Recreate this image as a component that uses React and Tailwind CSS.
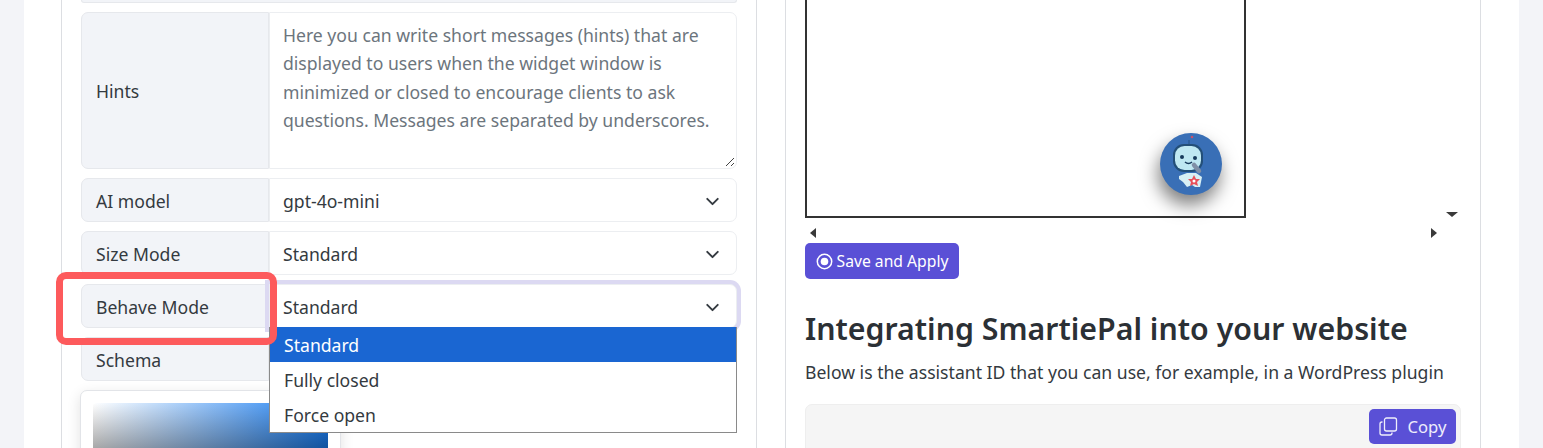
import React from 'react';
import { ChevronDown } from 'lucide-react';

const Chevron = () => <ChevronDown size={21} strokeWidth={2.2} className="text-[#343a40]" />;

const SelectRow = ({ label, value, focused }) => (
  <div className="flex h-[44px] shrink-0">
    <div className="w-[188px] shrink-0 flex items-center pl-[14px] pt-[2px] bg-[#f2f4f8] border border-[#e6e8ec] rounded-l-[7px] text-[#343a40]">{label}</div>
    <div className={`flex-1 flex items-center justify-between pl-[13px] pr-[13px] pt-[2px] bg-white border border-[#eceef1] rounded-r-[7px] text-[#343a40] ${focused ? 'shadow-[0_0_0_4px_#dcd9f2]' : ''}`}>
      <span>{value}</span>
      <Chevron />
    </div>
  </div>
);

const RobotBadge = () => (
  <svg width="64" height="64" viewBox="0 0 64 64" className="drop-shadow-[-2px_10px_9px_rgba(0,0,0,0.5)]">
    <circle cx="32" cy="32" r="31" fill="#396fb6" />
    <circle cx="33" cy="5" r="1.3" fill="#c9506a" />
    <path d="M30 8v5" stroke="#2c5c96" strokeWidth="1.5" />
    <rect x="14" y="12" width="30" height="28" rx="11" fill="#234f78" />
    <rect x="16" y="14" width="26" height="24" rx="9.5" fill="#bfe8f2" />
    <circle cx="23" cy="25" r="2" fill="#173a5c" />
    <circle cx="36" cy="26" r="2" fill="#173a5c" />
    <path d="M26 30q3.500 3 7 0" fill="none" stroke="#173a5c" strokeWidth="1.5" />
    <path d="M35 33l5 6" stroke="#7f8fa6" strokeWidth="4.500" strokeLinecap="round" />
    <path d="M20 44l8-3 9 0 6 4-2 10-5 0-3-2-5 2-4-5-4-3z" fill="#d8f0f5" />
    <polygon points="35,43 37,47 41,47 38,50 39,54 35,52 31,54 32,50 29,47 33,47" fill="#e8505a" />
    <circle cx="35" cy="49" r="1.500" fill="#ffffff" />
  </svg>
);

const Arrow = ({ points, className }) => (
  <svg width="14" height="14" viewBox="0 0 14 14" className={className}>
    <polygon points={points} fill="#3a3a3a" />
  </svg>
);

const RadioIcon = () => (
  <svg width="17" height="17" viewBox="0 0 17 17" fill="none">
    <circle cx="8.500" cy="8.500" r="7.200" stroke="currentColor" strokeWidth="1.500" />
    <circle cx="8.500" cy="8.500" r="3.800" fill="currentColor" />
  </svg>
);

const CopyIcon = () => (
  <svg width="19" height="19" viewBox="0 0 19 19" fill="none" stroke="currentColor" strokeWidth="1.300">
    <rect x="5.500" y="1" width="12" height="13" rx="2" />
    <path d="M3.500 5H3a2 2 0 0 0-2 2v9a2 2 0 0 0 2 2h8a2 2 0 0 0 2-2v-.5" />
  </svg>
);

export default function App() {
  return (
    <div
      className="h-[448px] overflow-hidden bg-[#f3f4f8] relative text-[17.6px] leading-[28.3px]"
      style={{ fontFamily: '"Noto Sans", "Open Sans", sans-serif' }}
    >
      <div className="mx-[24px] h-full bg-white flex gap-[28px] pl-[37px] pr-[37px]">
        {/* Left card */}
        <div className="w-[696px] shrink-0 border-x border-[#dcdee2] px-[19px] flex flex-col gap-[9px]">
          <div className="h-[3px] shrink-0 border-b border-x border-[#e6e8ec] rounded-b-[7px] bg-[#f2f4f8]" />
          <div className="flex h-[157px] shrink-0">
            <div className="w-[188px] shrink-0 flex items-center pl-[14px] pt-[2px] bg-[#f2f4f8] border border-[#e6e8ec] rounded-l-[7px] text-[#343a40]">Hints</div>
            <div className="flex-1 relative bg-white border border-[#eceef1] rounded-r-[7px] pl-[13px] pr-[14px] pt-[8px] text-[#6c757d]">
              Here you can write short messages (hints) that are displayed to users when the widget window is minimized or closed to encourage clients to ask questions. Messages are separated by underscores.
              <svg width="10" height="10" viewBox="0 0 10 10" className="absolute right-[1px] bottom-[1px]">
                <path d="M1 9l8-8M6 9l3-3" stroke="#444" strokeWidth="1" />
              </svg>
            </div>
          </div>
          <SelectRow label="AI model" value="gpt-4o-mini" />
          <SelectRow label="Size Mode" value="Standard" />
          <SelectRow label="Behave Mode" value="Standard" focused />
          <SelectRow label="Schema" value="" />
          <div className="w-[261px] h-[80px] shrink-0 -ml-[1px] border border-[#e2e4e8] rounded-[7px] bg-white pt-[12px] px-[12px] shadow-[0_4px_14px_rgba(0,0,0,0.12)]">
            <div className="h-[60px] rounded-t-[3px] bg-[linear-gradient(to_right,#ffffff,#1a7df0)] relative overflow-hidden">
              <div className="absolute inset-0 bg-[linear-gradient(to_bottom,rgba(0,0,0,0),rgba(0,0,0,0.45))]" />
            </div>
          </div>
        </div>

        {/* Right card */}
        <div className="w-[696px] shrink-0 border-x border-[#dcdee2] px-[19px] flex flex-col">
          <div className="relative w-[656px] h-[236px] shrink-0">
            <div className="w-[441px] h-[218px] border-2 border-t-0 border-[#333333] bg-white relative">
              <div className="absolute left-[352px] top-[132px]"><RobotBadge /></div>
            </div>
            <Arrow points="4,7 10,2 10,12" className="absolute left-[1px] top-[226px]" />
            <Arrow points="4,2 10,7 4,12" className="absolute left-[622px] top-[226px]" />
            <Arrow points="1,4 13,4 7,9" className="absolute left-[640px] top-[208px]" />
          </div>
          <button className="mt-[7px] w-[154px] h-[36px] shrink-0 rounded-[5px] bg-[#5a50d6] text-white text-[15.7px] flex items-center justify-center gap-[4px]">
            <RadioIcon />
            Save and Apply
          </button>
          <h3 className="mt-[30px] text-[30.3px] leading-[40px] font-semibold text-[#2b3035] whitespace-nowrap">Integrating SmartiePal into your website</h3>
          <p className="mt-[9px] text-[17.6px] text-[#343a40] whitespace-nowrap">Below is the assistant ID that you can use, for example, in a WordPress plugin</p>
          <div className="mt-[18px] w-[656px] h-[60px] shrink-0 rounded-t-[7px] bg-[#f5f5f5] border border-[#eeeeee] flex justify-end pt-[4px] pr-[4px]">
            <button className="w-[87px] h-[35px] rounded-[5px] bg-[#5a50d6] text-white/90 text-[16.6px] flex items-center justify-center gap-[10px]">
              <CopyIcon />
              Copy
            </button>
          </div>
        </div>
      </div>

      {/* Native dropdown list */}
      <div className="absolute left-[269px] top-[327px] w-[468px] h-[106px] bg-white border-x border-b border-[#8a8a8a] text-[#343a40]">
        <div className="h-[35px] pl-[14px] pt-[2px] flex items-center bg-[#1a66d2] text-white">Standard</div>
        <div className="h-[35px] pl-[14px] pt-[2px] flex items-center">Fully closed</div>
        <div className="h-[35px] pl-[14px] pt-[2px] flex items-center">Force open</div>
      </div>

      {/* Red highlight */}
      <div className="absolute left-[56px] top-[272px] w-[221px] h-[73px] border-[7px] border-[#fd5a5c] rounded-[10px]" />
    </div>
  );
}
